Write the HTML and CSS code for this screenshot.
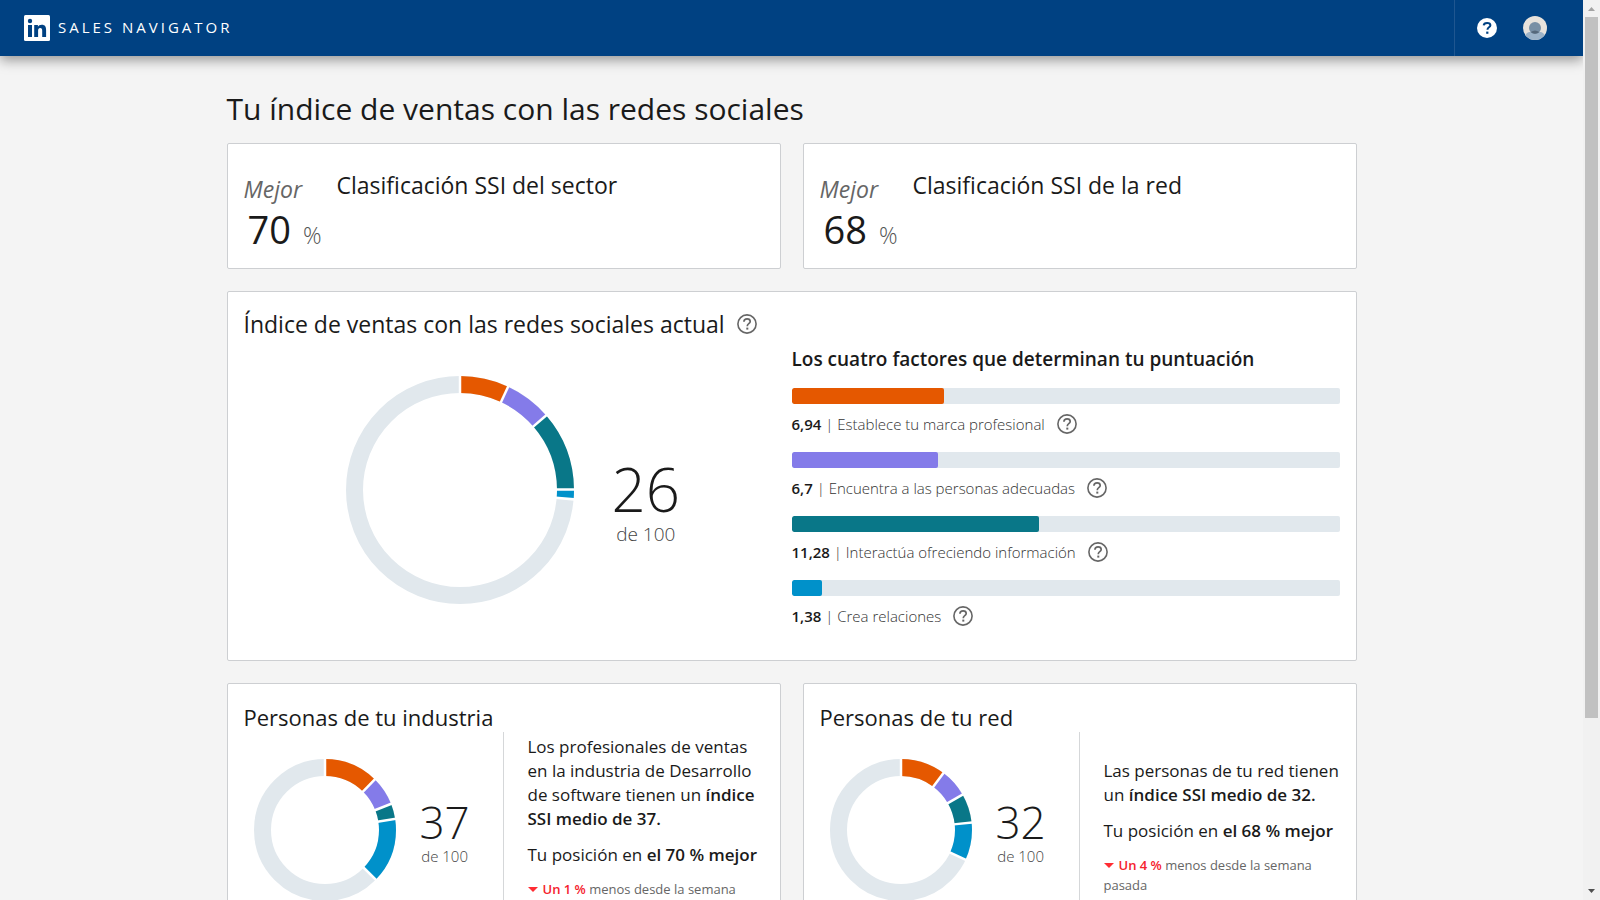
FILE: index.html
```html
<!DOCTYPE html>
<html lang="es">
<head>
<meta charset="utf-8">
<title>Sales Navigator: índice de ventas con las redes sociales</title>
<link rel="stylesheet" href="styles.css">
</head>
<body>
<svg width="0" height="0" class="defs" aria-hidden="true">
  <symbol id="help" viewBox="0 0 20 20">
    <circle cx="10" cy="10" r="9.100" fill="none" stroke="currentColor" stroke-width="1.600"/>
    <path d="M6.900 7.700C7 5.900 8.200 4.900 10.100 4.900c1.800 0 3.100 1 3.100 2.600 0 2.100-2.900 2.300-2.900 4.400v.3" fill="none" stroke="currentColor" stroke-width="1.700"/>
    <rect x="9.300" y="13.600" width="2" height="2" fill="currentColor"/>
  </symbol>
</svg>
<div class="window">
  <div class="page">
    <header class="topbar">
      <a class="brand" href="#">
        <svg class="logo" viewBox="0 0 26 26" aria-hidden="true">
          <rect width="26" height="26" rx="1.500" fill="#fff"/>
          <circle cx="6" cy="6" r="2.200" fill="#004182"/>
          <path d="M4 10h4v12H4zM10.200 10h3.700v1.700c.6-1.100 2-2 3.800-2 3.500 0 4.400 2.200 4.400 5.400V22h-3.900v-6.200c0-1.500-.2-2.900-2-2.900-1.800 0-2.100 1.400-2.100 2.900V22h-3.900z" fill="#004182"/>
        </svg>
        <span class="brand-name">SALES NAVIGATOR</span>
      </a>
      <div class="tools">
        <button class="tool" type="button" aria-label="Ayuda">
          <svg class="tool-help" viewBox="0 0 20 20" aria-hidden="true">
            <circle cx="10" cy="10" r="10" fill="#fff"/>
            <path d="M6.700 7.400C6.800 5.700 8.100 4.900 10.100 4.900c2 0 3.300.8 3.300 2.400 0 1.900-2.900 2-2.900 4.100v.4" fill="none" stroke="#004182" stroke-width="2"/>
            <rect x="9.200" y="13.600" width="2.200" height="2.200" fill="#004182"/>
          </svg>
        </button>
        <button class="tool" type="button" aria-label="Perfil">
          <svg class="avatar" viewBox="0 0 24 24" aria-hidden="true">
            <clipPath id="round"><circle cx="12" cy="12" r="12"/></clipPath>
            <g clip-path="url(#round)">
              <rect width="24" height="24" fill="#e7e2dc"/>
              <path d="M2 24v-3c0-3 2.500-5 5.500-5h9c3 0 5.500 2 5.500 5v3z" fill="#9db3c8"/>
              <circle cx="12" cy="12" r="6" fill="#788fa5"/>
              <path d="M7.800 16a7 7 0 0 1 8.400 0 6 6 0 0 1-8.400 0z" fill="#56687a"/>
            </g>
          </svg>
        </button>
      </div>
    </header>
    <main class="content">
      <h1 class="title">Tu índice de ventas con las redes sociales</h1>
      <div class="pair">
        <section class="card rank">
          <div class="rank-score">
            <em class="rank-top">Mejor</em>
            <div class="rank-value"><span class="rank-num">70</span><span class="rank-pct">%</span></div>
          </div>
          <h2 class="heading rank-heading">Clasificación SSI del sector</h2>
        </section>
        <section class="card rank">
          <div class="rank-score">
            <em class="rank-top">Mejor</em>
            <div class="rank-value"><span class="rank-num">68</span><span class="rank-pct">%</span></div>
          </div>
          <h2 class="heading rank-heading">Clasificación SSI de la red</h2>
        </section>
      </div>
      <section class="card current">
        <div class="current-head">
          <h2 class="heading">Índice de ventas con las redes sociales actual</h2>
          <button class="help" type="button" aria-label="Ayuda sobre el índice"><svg class="help-icon"><use href="#help"/></svg></button>
        </div>
        <div class="current-body">
          <div class="overall">
            <svg class="donut-large" viewBox="-114 -114 228 228" role="img" aria-label="26 de 100">
              <g transform="rotate(-90)" fill="none" stroke-width="17">
                <circle r="105.500" stroke="#e1e8ed"/>
                <circle r="105.500" pathLength="100" stroke="#0091ca" stroke-dasharray="1.380 100" stroke-dashoffset="-24.920"/>
                <circle r="105.500" pathLength="100" stroke="#097788" stroke-dasharray="11.280 100" stroke-dashoffset="-13.640"/>
                <circle r="105.500" pathLength="100" stroke="#847be9" stroke-dasharray="6.700 100" stroke-dashoffset="-6.940"/>
                <circle r="105.500" pathLength="100" stroke="#e55800" stroke-dasharray="6.940 100"/>
              </g>
              <g stroke="#fff" stroke-width="2.500">
                <path d="M0-96v-19"/>
                <path d="M0-96v-19" transform="rotate(24.980)"/>
                <path d="M0-96v-19" transform="rotate(49.100)"/>
                <path d="M0-96v-19" transform="rotate(89.700)"/>
                <path d="M0-96v-19" transform="rotate(94.700)"/>
              </g>
            </svg>
            <div class="score score-large"><span class="score-num">26</span><span class="score-of">de 100</span></div>
          </div>
          <div class="factors">
            <h3 class="factors-title">Los cuatro factores que determinan tu puntuación</h3>
            <div class="factor">
              <div class="track"><div class="fill orange" style="width:27.76%"></div></div>
              <div class="factor-label"><span><strong>6,94</strong> | Establece tu marca profesional</span><button class="help" type="button" aria-label="Ayuda: marca profesional"><svg class="help-icon"><use href="#help"/></svg></button></div>
            </div>
            <div class="factor">
              <div class="track"><div class="fill purple" style="width:26.8%"></div></div>
              <div class="factor-label"><span><strong>6,7</strong> | Encuentra a las personas adecuadas</span><button class="help" type="button" aria-label="Ayuda: personas adecuadas"><svg class="help-icon"><use href="#help"/></svg></button></div>
            </div>
            <div class="factor">
              <div class="track"><div class="fill teal" style="width:45.12%"></div></div>
              <div class="factor-label"><span><strong>11,28</strong> | Interactúa ofreciendo información</span><button class="help" type="button" aria-label="Ayuda: ofrecer información"><svg class="help-icon"><use href="#help"/></svg></button></div>
            </div>
            <div class="factor">
              <div class="track"><div class="fill blue" style="width:5.52%"></div></div>
              <div class="factor-label"><span><strong>1,38</strong> | Crea relaciones</span><button class="help" type="button" aria-label="Ayuda: crear relaciones"><svg class="help-icon"><use href="#help"/></svg></button></div>
            </div>
          </div>
        </div>
      </section>
      <div class="pair">
        <section class="card people">
          <h2 class="heading">Personas de tu industria</h2>
          <div class="people-body">
            <div class="people-chart">
              <svg class="donut-small" viewBox="-71 -71 142 142" role="img" aria-label="37 de 100">
                <g transform="rotate(-90)" fill="none" stroke-width="17">
                  <circle r="62.500" stroke="#e1e8ed"/>
                  <circle r="62.500" pathLength="100" stroke="#0091ca" stroke-dasharray="14.800 100" stroke-dashoffset="-22.500"/>
                  <circle r="62.500" pathLength="100" stroke="#097788" stroke-dasharray="3.500 100" stroke-dashoffset="-19"/>
                  <circle r="62.500" pathLength="100" stroke="#847be9" stroke-dasharray="6.600 100" stroke-dashoffset="-12.400"/>
                  <circle r="62.500" pathLength="100" stroke="#e55800" stroke-dasharray="12.400 100"/>
                </g>
                <g stroke="#fff" stroke-width="2.500">
                  <path d="M0-53v-19"/>
                  <path d="M0-53v-19" transform="rotate(44.600)"/>
                  <path d="M0-53v-19" transform="rotate(68.400)"/>
                  <path d="M0-53v-19" transform="rotate(81)"/>
                  <path d="M0-53v-19" transform="rotate(134.300)"/>
                </g>
              </svg>
              <div class="score score-small"><span class="score-num">37</span><span class="score-of">de 100</span></div>
            </div>
            <div class="people-text">
              <p class="lead">Los profesionales de ventas en la industria de Desarrollo de software tienen un <strong>índice SSI medio de 37.</strong></p>
              <p class="lead">Tu posición en <strong>el 70 % mejor</strong></p>
              <p class="change"><span class="caret"></span><span class="down">Un 1 %</span> menos desde la semana pasada</p>
            </div>
          </div>
        </section>
        <section class="card people">
          <h2 class="heading">Personas de tu red</h2>
          <div class="people-body">
            <div class="people-chart">
              <svg class="donut-small" viewBox="-71 -71 142 142" role="img" aria-label="32 de 100">
                <g transform="rotate(-90)" fill="none" stroke-width="17">
                  <circle r="62.500" stroke="#e1e8ed"/>
                  <circle r="62.500" pathLength="100" stroke="#0091ca" stroke-dasharray="8.600 100" stroke-dashoffset="-23.300"/>
                  <circle r="62.500" pathLength="100" stroke="#097788" stroke-dasharray="6.600 100" stroke-dashoffset="-16.700"/>
                  <circle r="62.500" pathLength="100" stroke="#847be9" stroke-dasharray="6.500 100" stroke-dashoffset="-10.200"/>
                  <circle r="62.500" pathLength="100" stroke="#e55800" stroke-dasharray="10.200 100"/>
                </g>
                <g stroke="#fff" stroke-width="2.500">
                  <path d="M0-53v-19"/>
                  <path d="M0-53v-19" transform="rotate(36.700)"/>
                  <path d="M0-53v-19" transform="rotate(60.100)"/>
                  <path d="M0-53v-19" transform="rotate(83.900)"/>
                  <path d="M0-53v-19" transform="rotate(114.800)"/>
                </g>
              </svg>
              <div class="score score-small"><span class="score-num">32</span><span class="score-of">de 100</span></div>
            </div>
            <div class="people-text">
              <p class="lead">Las personas de tu red tienen un <strong>índice SSI medio de 32.</strong></p>
              <p class="lead">Tu posición en <strong>el 68 % mejor</strong></p>
              <p class="change"><span class="caret"></span><span class="down">Un 4 %</span> menos desde la semana pasada</p>
            </div>
          </div>
        </section>
      </div>
    </main>
  </div>
  <div class="scrollbar" aria-hidden="true">
    <svg class="arrow" viewBox="0 0 17 17"><path d="M5 11l3.500-4 3.500 4z" fill="#a3a3a3"/></svg>
    <div class="rail"><div class="thumb"></div></div>
    <svg class="arrow" viewBox="0 0 17 17"><path d="M5 6l3.500 4 3.500-4z" fill="#505050"/></svg>
  </div>
</div>
</body>
</html>
```
FILE: styles.css
```css
* { box-sizing: border-box; }
body {
  margin: 0;
  background: #f4f4f4;
  color: #1a1a1a;
  font-family: "Open Sans", "Noto Sans", sans-serif;
  font-weight: 400;
}
h1, h2, h3, p { margin: 0; font-weight: inherit; }
button { padding: 0; border: 0; background: none; cursor: pointer; color: inherit; }
strong { font-weight: 600; }
.defs { display: none; }

.window { display: flex; height: 100vh; overflow: hidden; }
.page { flex: 1; min-width: 0; overflow: hidden; }

.topbar {
  display: flex;
  justify-content: space-between;
  height: 56px;
  background: #004182;
  box-shadow: 0 4px 12px rgba(0, 0, 0, 0.4);
}
.brand { display: flex; align-items: center; gap: 8px; margin-left: 24px; color: #fff; text-decoration: none; }
.logo { width: 26px; height: 26px; }
.brand-name { padding-bottom: 2px; font-size: 15px; line-height: 20px; letter-spacing: 3px; }
.tools { display: flex; align-items: center; gap: 26px; padding: 0 36px 0 22px; border-left: 1px solid #1f5690; }
.tool { display: flex; }
.tool-help { width: 20px; height: 20px; }
.avatar { width: 24px; height: 24px; }

.content { max-width: 1130px; margin: 0 auto; padding-top: 33px; }
.title { margin-bottom: 14px; font-size: 30px; line-height: 40px; }
.pair { display: grid; grid-template-columns: 1fr 1fr; gap: 22px; }
.card { background: #fff; border: 1px solid #cdcfd2; border-radius: 2px; }
.heading { font-size: 23px; line-height: 32px; }

.rank { display: flex; gap: 16px; height: 126px; padding: 25px 16px 0; }
.rank-score { width: 77px; }
.rank-top { display: block; font-size: 23px; line-height: 40px; color: #666; }
.rank-value { display: flex; align-items: baseline; gap: 12px; padding-left: 4px; line-height: 40px; }
.rank-num { font-size: 38px; }
.rank-pct { font-size: 23px; font-weight: 300; color: #555; }

.current { margin: 22px 0; padding: 16px; }
.current-head { display: flex; align-items: center; gap: 12px; }
.current-body { display: grid; grid-template-columns: 1fr 1fr; }
.overall { display: flex; align-items: flex-start; gap: 38px; padding: 36px 0 0 102px; }
.donut-large { width: 228px; height: 228px; }
.score { display: flex; flex-direction: column; align-items: center; }
.score-num { font-weight: 300; }
.score-of { font-weight: 300; color: #444; }
.score-large { padding-top: 81px; }
.score-large .score-num { font-size: 60px; line-height: 64px; }
.score-large .score-of { font-size: 19px; line-height: 26px; }
.help { display: flex; color: #666; }
.help-icon { width: 20px; height: 20px; }

.factors-title { margin: 7px 0 17px; font-size: 19px; line-height: 24px; font-weight: 600; }
.factor { height: 64px; }
.track { height: 16px; border-radius: 2px; background: #e1e8ed; overflow: hidden; }
.fill { height: 16px; border-radius: 2px; }
.orange { background: #e55800; }
.purple { background: #847be9; }
.teal { background: #097788; }
.blue { background: #0091ca; }
.factor-label { display: flex; align-items: center; gap: 12px; padding-top: 8px; font-size: 15px; line-height: 24px; font-weight: 300; color: #333; }
.factor-label strong { color: #1a1a1a; }

.people { padding: 18px 16px 16px; }
.people .heading { font-size: 22px; line-height: 30px; }
.people-body { display: grid; grid-template-columns: 260px 1fr; min-height: 190px; }
.people-chart { display: flex; align-items: center; gap: 24px; padding: 6px 0 0 10px; border-right: 1px solid #d5d7d9; }
.donut-small { width: 142px; height: 142px; }
.score-small { padding-top: 4px; }
.score-small .score-num { font-size: 44px; line-height: 48px; }
.score-small .score-of { font-size: 15px; line-height: 20px; }
.people-text { align-self: center; padding-left: 24px; }
.lead { margin-bottom: 12px; font-size: 17px; line-height: 24px; }
.change { font-size: 13px; line-height: 20px; color: #666; }
.caret { display: inline-block; margin: 0 5px 2px 0; border: 5px solid transparent; border-top-color: #ff2c33; border-bottom: 0; }
.down { color: #f5222d; font-weight: 600; }

.scrollbar { display: flex; flex-direction: column; width: 17px; background: #f1f1f1; }
.arrow { width: 17px; height: 17px; }
.rail { flex: 1; padding: 0 2px; }
.thumb { height: 81%; background: #c1c1c1; }
```
